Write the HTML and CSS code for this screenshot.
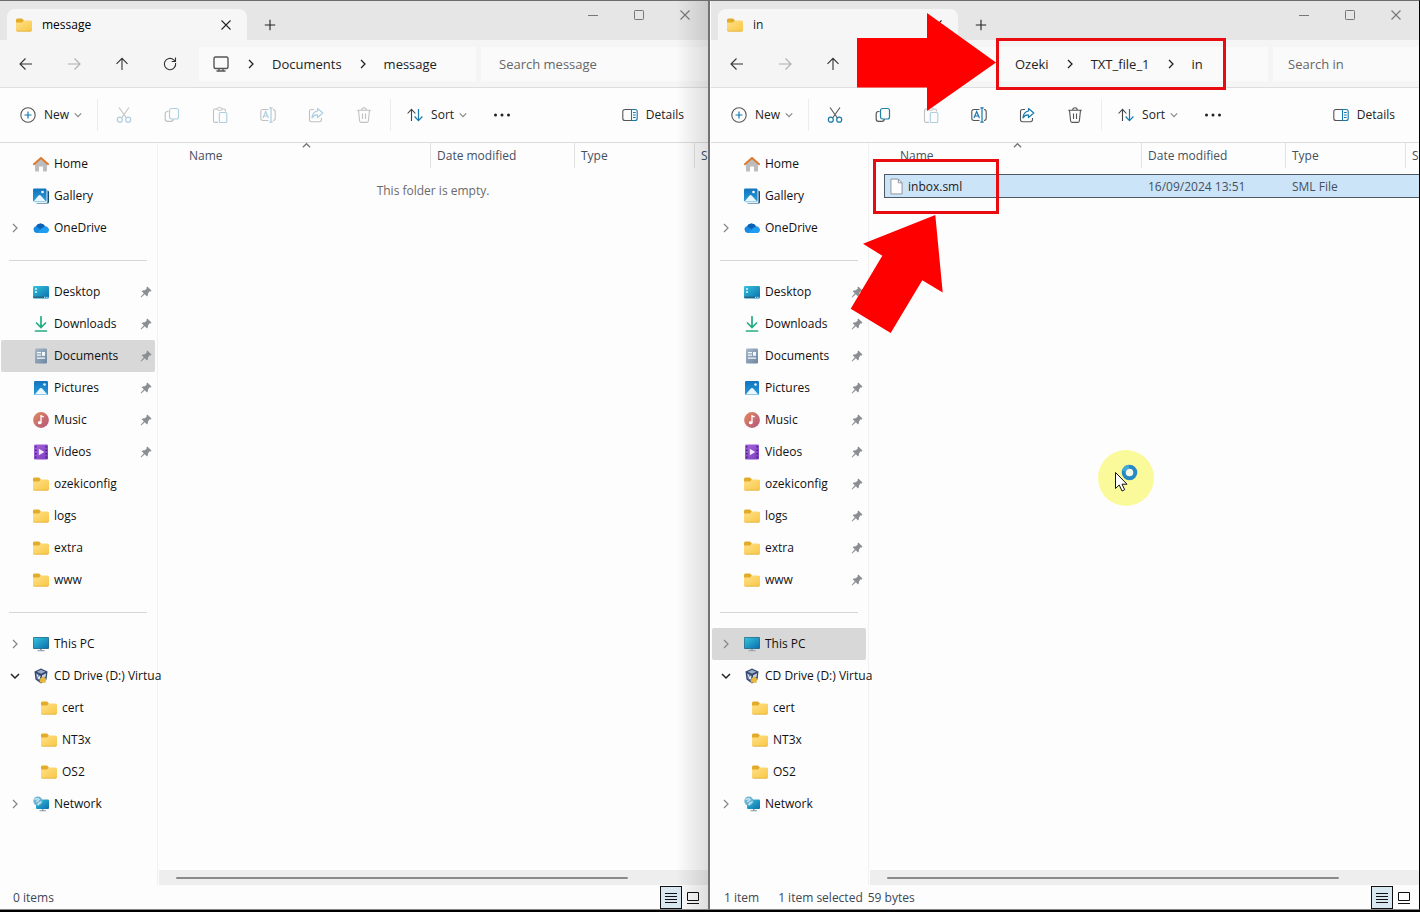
FILE: index.html
```html
<!DOCTYPE html>
<html lang="en">
<head>
<meta charset="utf-8">
<title>File Explorer</title>
<link rel="stylesheet" href="styles.css">
</head>
<body>
<svg class="defs" aria-hidden="true">
  <defs>
    <linearGradient id="g-folder" x1="0" y1="0" x2="1" y2="1"><stop offset="0" stop-color="#ffe08a"/><stop offset="1" stop-color="#f8c744"/></linearGradient>
    <linearGradient id="g-blue" x1="0" y1="0" x2="1" y2="1"><stop offset="0" stop-color="#36c3dc"/><stop offset="1" stop-color="#0b6fae"/></linearGradient>
    <linearGradient id="g-pic" x1="0" y1="0" x2="0" y2="1"><stop offset="0" stop-color="#1174bd"/><stop offset="1" stop-color="#2a9bdc"/></linearGradient>
    <linearGradient id="g-music" x1="0" y1="0" x2="1" y2="1"><stop offset="0" stop-color="#e58a5c"/><stop offset="1" stop-color="#b0557f"/></linearGradient>
    <linearGradient id="g-video" x1="0" y1="0" x2="1" y2="1"><stop offset="0" stop-color="#a764dc"/><stop offset="1" stop-color="#7a3dc0"/></linearGradient>
    <linearGradient id="g-doc" x1="0" y1="0" x2="1" y2="1"><stop offset="0" stop-color="#a7b9cb"/><stop offset="1" stop-color="#6d859e"/></linearGradient>
    <symbol id="folder" viewBox="0 0 16 16"><path d="M0 3Q0 1.500 1.500 1.500H6L8 3.500V7H0Z" fill="#e2ac28"/><path d="M0 5.500H6L8 3.500H14.500Q16 3.500 16 5V13Q16 14.500 14.500 14.500H1.500Q0 14.500 0 13Z" fill="url(#g-folder)"/><path d="M.5 13.500Q.8 14.200 1.500 14.200H14.500Q15.200 14.200 15.500 13.500" fill="none" stroke="#dfae3c" stroke-width=".7"/></symbol>
    <symbol id="home" viewBox="0 0 16 16"><path d="M2 7 8 2 14 7V14.500Q14 15.500 13 15.500H10V10.500H6V15.500H3Q2 15.500 2 14.500Z" fill="#bdbdc0"/><path d="M.9 8.200 8 1.900 15.100 8.200" fill="none" stroke="#dc7b30" stroke-width="2" stroke-linecap="round" stroke-linejoin="round"/></symbol>
    <symbol id="gallery" viewBox="0 0 16 16"><rect x="3" y="2.500" width="13" height="13" rx="1.500" fill="#164e6e"/><rect x="1.500" y="1.500" width="13" height="13.500" rx="1" fill="#dceef8"/><rect x="0" y=".5" width="13.500" height="13" rx="1.300" fill="url(#g-pic)"/><path d="M.8 13.300 5.500 7.500Q6.600 6.500 7.700 7.500L12.800 13.300Z" fill="#e9f6fd"/><circle cx="9.500" cy="4" r="1.300" fill="#fff"/></symbol>
    <symbol id="cloud" viewBox="0 0 16 16"><path d="M3.500 13A3.500 3.500 0 0 1 3 6.200 5 5 0 0 1 12 6.300 3.400 3.400 0 0 1 12.800 13Z" fill="#178be0"/><path d="M3 6.200A5 5 0 0 1 12 6.300L7 9Z" fill="#0b61b5"/><path d="M3.500 13 11 7.200Q16 6.700 16 10 15.600 13 12.800 13Z" fill="#1f9df0"/></symbol>
    <symbol id="desktop" viewBox="0 0 16 16"><rect y="2" width="16" height="12.500" rx="1.300" fill="url(#g-blue)"/><path d="M2 5H4M2 8H4" stroke="#d9f7ff" stroke-width="1.300"/><path d="M.5 13.300H11" stroke="#28627f" stroke-width="1.400"/><path d="M11 13.300H15.500" stroke="#9fe2f4" stroke-width="1.200" stroke-dasharray="1 .7"/></symbol>
    <symbol id="download" viewBox="0 0 16 16"><path d="M8 .8V11M3.500 7 8 11.500 12.500 7M2.500 15H13.500" fill="none" stroke="#26ac83" stroke-width="1.700" stroke-linecap="round"/></symbol>
    <symbol id="document" viewBox="0 0 16 16"><rect x="2" y=".5" width="12" height="15" rx="1.200" fill="url(#g-doc)"/><path d="M4 4.700H8M4 7.200H8M4 10.200H12" stroke="#f4f8fb" stroke-width="1.200"/><rect x="9" y="4" width="3" height="3.800" fill="#f4f8fb"/></symbol>
    <symbol id="picture" viewBox="0 0 16 16"><rect x="1" y="1" width="14" height="14" rx="1.200" fill="url(#g-pic)"/><path d="M1.800 14.500 6.800 8.500Q8 7.400 9.200 8.500L14.200 14.500Z" fill="#edf8fe"/><circle cx="11.500" cy="4.500" r="1.300" fill="#d8f1ff"/></symbol>
    <symbol id="music" viewBox="0 0 16 16"><circle cx="8" cy="8" r="7.900" fill="url(#g-music)"/><ellipse cx="6.700" cy="10.700" rx="1.900" ry="1.600" fill="#fff"/><path d="M8 10.700V3.800L10.800 5" fill="none" stroke="#fff" stroke-width="1.300"/></symbol>
    <symbol id="video" viewBox="0 0 16 16"><rect x="1" y=".5" width="14" height="15" rx="1.200" fill="url(#g-video)"/><path d="M2.800 2V15M13.200 2V15" stroke="#45207e" stroke-width="1.500" stroke-dasharray="1.500 2"/><path d="M5.800 4.700 11.300 8 5.800 11.300Z" fill="#f3e9ff"/></symbol>
    <symbol id="pc" viewBox="0 0 16 16"><path d="M7 12H9V14H11.500V15.200H4.500V14H7Z" fill="#9aa7b2"/><rect y="1" width="16" height="12" rx="1" fill="#316b85"/><rect x=".7" y="1.700" width="14.600" height="10.600" rx=".5" fill="url(#g-blue)"/></symbol>
    <symbol id="cd" viewBox="0 0 16 16"><path d="M8 .6 14.500 3.500 13.500 11.500 8 15.400 2.500 11.500 1.500 3.500Z" fill="#30446d"/><path d="M3.500 3.700 8 1.800 12.500 3.700 8 5.800Z" fill="#9babc4"/><path d="M2.800 5 7.400 7.200V13.500L3.500 10.800Z" fill="#6e81a5"/><path d="M4 6.500 6 11 7 8" stroke="#fff" stroke-width=".9" fill="none"/><path d="M9 7.300 13.200 5.300 12.500 9 9 10Z" fill="#c8d1df"/><path d="M7.500 10 10.500 8.500 13 10.500 12.500 15 9.500 14.500 6.500 14.800Z" fill="#e8b83d"/></symbol>
    <symbol id="network" viewBox="0 0 16 16"><path d="M9 12H10.500V14.200H13V15.300H6.500V14.200H9Z" fill="#8a9aa7"/><rect x="3" y="3.500" width="13" height="9.500" rx="1" fill="url(#g-blue)"/><circle cx="4.800" cy="5" r="4.500" fill="#6db3d3"/><path d="M1.500 3.500Q4.500 2 6 3.500 5 5.500 3 5.500M5 9.300Q5 7 8.500 6" fill="none" stroke="#c4e6f2" stroke-width="1.500"/></symbol>
    <symbol id="pin" viewBox="0 0 12 12"><path d="M7.300.6 11.500 4.500 10.600 5.500 9.700 5.300 8 7.400Q8.200 9.200 7 10.400L4.800 8.200 1.200 11.400.6 10.900 3.800 7.300 1.600 5.200Q3 4 4.800 4.300L6.800 2.500 6.500 1.500Z" fill="#8b8e92"/></symbol>
    <symbol id="chev" viewBox="0 0 10 10"><path d="M3 1 7 5 3 9" fill="none" stroke="currentColor" stroke-width="1.300"/></symbol>
    <symbol id="chev-down" viewBox="0 0 10 10"><path d="M1 3 5 7 9 3" fill="none" stroke="currentColor" stroke-width="1.500"/></symbol>
    <symbol id="back" viewBox="0 0 16 16"><path d="M14 8H2M7.500 2.500 2 8 7.500 13.500" fill="none" stroke="currentColor" stroke-width="1.100"/></symbol>
    <symbol id="forward" viewBox="0 0 16 16"><path d="M2 8H14M8.500 2.500 14 8 8.500 13.500" fill="none" stroke="currentColor" stroke-width="1.100"/></symbol>
    <symbol id="up" viewBox="0 0 16 16"><path d="M8 14V2.500M2.500 7.800 8 2.300 13.500 7.800" fill="none" stroke="currentColor" stroke-width="1.100"/></symbol>
    <symbol id="refresh" viewBox="0 0 16 16"><path d="M13.600 7A5.700 5.700 0 1 1 11.800 3.800L13.500 5.500M13.500 1.500V5.500H9.700" fill="none" stroke="currentColor" stroke-width="1.100"/></symbol>
    <symbol id="monitor" viewBox="0 0 18 18"><rect x="2" y="2" width="14" height="11.500" rx="1.500" fill="none" stroke="#555" stroke-width="1.400"/><path d="M7 13.500V16M11 13.500V16M4.500 16H13.500" stroke="#555" stroke-width="1.300"/></symbol>
    <symbol id="close" viewBox="0 0 12 12"><path d="M1.500 1.500 10.500 10.500M10.500 1.500 1.500 10.500" stroke="currentColor" stroke-width="1.100"/></symbol>
    <symbol id="plus" viewBox="0 0 12 12"><path d="M6 .8V11.200M.8 6H11.200" stroke="currentColor" stroke-width="1.100"/></symbol>
    <symbol id="min" viewBox="0 0 12 12"><path d="M1 6.500H11" stroke="currentColor"/></symbol>
    <symbol id="max" viewBox="0 0 12 12"><rect x="1.500" y="1.500" width="9" height="9" rx=".8" fill="none" stroke="currentColor"/></symbol>
    <symbol id="new" viewBox="0 0 16 16"><circle cx="8" cy="8" r="7.200" fill="none" stroke="#555" stroke-width="1.100"/><path d="M8 4.500V11.500M4.500 8H11.500" stroke="#1779ad" stroke-width="1.200"/></symbol>
    <symbol id="cut" viewBox="0 0 16 16"><path d="M3 .5 10.600 11.200M13 .5 5.400 11.200" stroke="#555" stroke-width="1.100"/><g fill="none" stroke="#1779ad" stroke-width="1.200"><circle cx="3.800" cy="12.700" r="2.500"/><circle cx="12.200" cy="12.700" r="2.500"/></g></symbol>
    <symbol id="copy" viewBox="0 0 16 16"><path d="M4.500 4.500H3.500Q1.200 4.500 1.200 6.800V12Q1.200 14.300 3.500 14.300H7Q9.200 14.300 9.300 12" fill="none" stroke="#555" stroke-width="1.200"/><rect x="5.500" y="1.500" width="9" height="10.500" rx="2" fill="none" stroke="#1f80a8" stroke-width="1.200"/></symbol>
    <symbol id="paste" viewBox="0 0 16 16"><path d="M5 2H3Q1.500 2 1.500 3.500V14Q1.500 15.400 3 15.400H6M10 2H12Q13.500 2 13.500 3.500V4.500" fill="none" stroke="#555" stroke-width="1.100"/><rect x="5" y=".7" width="5" height="2.600" rx="1.200" fill="none" stroke="#555"/><rect x="7.300" y="5.500" width="7.500" height="10" rx="1.200" fill="none" stroke="#1779ad" stroke-width="1.100"/></symbol>
    <symbol id="rename" viewBox="0 0 16 16"><path d="M8.500 2.500H3Q.8 2.500.8 4.700V11.300Q.8 13.500 3 13.500H8.500M13 2.500Q15.200 2.700 15.200 4.700V11.300Q15.200 13.300 13 13.500" fill="none" stroke="#555" stroke-width="1.100"/><path d="M11 .8V15.200M9.300.8H12.700M9.300 15.200H12.700M3 11 5.700 4.500 8.400 11M4 9H7.400" fill="none" stroke="#1779ad" stroke-width="1.200"/></symbol>
    <symbol id="share" viewBox="0 0 16 16"><path d="M6 2.500H3.500Q1.500 2.500 1.500 4.500V12.500Q1.500 14.700 3.500 14.700H11.500Q13.500 14.700 13.500 12.500V11" fill="none" stroke="#555" stroke-width="1.100"/><path d="M9.500 1.500 14.800 6 9.500 10.500V8Q6 7.700 4 10.800 4.500 4.800 9.500 4Z" fill="none" stroke="#1779ad" stroke-width="1.200" stroke-linejoin="round"/></symbol>
    <symbol id="trash" viewBox="0 0 16 16"><path d="M1.200 3.200H14.800M5.700 3.200Q5.700.8 8 .8 10.300.8 10.300 3.200M2.500 3.200 3.600 13.700Q3.800 15.400 5.400 15.400H10.600Q12.200 15.400 12.400 13.700L13.500 3.200M6.500 6.500V12M9.500 6.500V12" fill="none" stroke="#555" stroke-width="1.100"/></symbol>
    <symbol id="sort" viewBox="0 0 16 16"><path d="M4.500 14V2.500M.6 6.500 4.500 2.300 8.400 6.500" fill="none" stroke="#444" stroke-width="1.100"/><path d="M11.500 2V13.500M7.600 9.500 11.500 13.700 15.400 9.500" fill="none" stroke="#1779ad" stroke-width="1.200"/></symbol>
    <symbol id="dots" viewBox="0 0 18 16"><g fill="#222"><circle cx="2.500" cy="8" r="1.500"/><circle cx="9" cy="8" r="1.500"/><circle cx="15.500" cy="8" r="1.500"/></g></symbol>
    <symbol id="details" viewBox="0 0 16 16"><path d="M9.500 2.500H3Q.8 2.500.8 4.500V11.500Q.8 13.500 3 13.500H9.500" fill="none" stroke="#555" stroke-width="1.100"/><path d="M9.500 2.500H13Q15.200 2.500 15.200 4.500V11.500Q15.200 13.500 13 13.500H9.500ZM11 5.500H13.700M11 8H13.700M11 10.500H13.700" fill="none" stroke="#1779ad" stroke-width="1.100"/></symbol>
    <symbol id="file" viewBox="0 0 14 18"><path d="M1 1H9L13 5V17H1Z" fill="#fdfdfd" stroke="#8b8f93"/><path d="M9 1V5H13" fill="none" stroke="#8b8f93"/></symbol>
    <symbol id="list" viewBox="0 0 12 12"><path d="M0 1.500H12M0 4.500H12M0 7.500H12M0 10.500H12" stroke="#111"/></symbol>
    <symbol id="tiles" viewBox="0 0 12 12"><path d="M.5.5H11.500V8.500H.5ZM0 11.500H12" fill="none" stroke="#111"/></symbol>
  </defs>
</svg>

<div class="desktop">
  <section class="window window-left" aria-label="message">
    <header class="tabbar">
      <div class="tab tab-active"><svg class="i16"><use href="#folder"/></svg><span class="tab-title">message</span><button class="plain" aria-label="Close tab"><svg class="i12"><use href="#close"/></svg></button></div>
      <button class="plain add-tab" aria-label="New tab"><svg class="i12"><use href="#plus"/></svg></button>
      <div class="controls">
        <button class="plain" aria-label="Minimize"><svg class="i12"><use href="#min"/></svg></button>
        <button class="plain" aria-label="Maximize"><svg class="i12"><use href="#max"/></svg></button>
        <button class="plain" aria-label="Close"><svg class="i12"><use href="#close"/></svg></button>
      </div>
    </header>
    <div class="addressbar">
      <div class="nav">
        <button class="plain" aria-label="Back"><svg class="i16"><use href="#back"/></svg></button>
        <button class="plain" aria-label="Forward" disabled><svg class="i16"><use href="#forward"/></svg></button>
        <button class="plain" aria-label="Up"><svg class="i16"><use href="#up"/></svg></button>
        <button class="plain" aria-label="Refresh"><svg class="i16"><use href="#refresh"/></svg></button>
      </div>
      <nav class="crumbs" aria-label="Path">
        <svg class="i18"><use href="#monitor"/></svg>
        <svg class="i10"><use href="#chev"/></svg>
        <a href="#documents">Documents</a>
        <svg class="i10"><use href="#chev"/></svg>
        <a href="#message">message</a>
      </nav>
      <input class="search" type="search" placeholder="Search message" aria-label="Search message">
    </div>
    <div class="toolbar">
      <button class="plain new"><svg class="i16"><use href="#new"/></svg>New<svg class="i8"><use href="#chev-down"/></svg></button>
      <div class="tools">
        <button class="plain" aria-label="Cut" disabled><svg class="i16"><use href="#cut"/></svg></button>
        <button class="plain" aria-label="Copy" disabled><svg class="i16"><use href="#copy"/></svg></button>
        <button class="plain" aria-label="Paste" disabled><svg class="i16"><use href="#paste"/></svg></button>
        <button class="plain" aria-label="Rename" disabled><svg class="i16"><use href="#rename"/></svg></button>
        <button class="plain" aria-label="Share" disabled><svg class="i16"><use href="#share"/></svg></button>
        <button class="plain" aria-label="Delete" disabled><svg class="i16"><use href="#trash"/></svg></button>
      </div>
      <button class="plain sort"><svg class="i16"><use href="#sort"/></svg>Sort<svg class="i8"><use href="#chev-down"/></svg></button>
      <button class="plain more" aria-label="See more"><svg class="i18"><use href="#dots"/></svg></button>
      <button class="plain details"><svg class="i16"><use href="#details"/></svg>Details</button>
    </div>
    <div class="body">
      <nav class="side" aria-label="Folders">
        <a class="row" href="#home"><span class="twist"></span><svg class="i16"><use href="#home"/></svg><span class="label">Home</span></a>
        <a class="row" href="#gallery"><span class="twist"></span><svg class="i16"><use href="#gallery"/></svg><span class="label">Gallery</span></a>
        <a class="row" href="#onedrive"><span class="twist"><svg class="i10"><use href="#chev"/></svg></span><svg class="i16"><use href="#cloud"/></svg><span class="label">OneDrive</span></a>
        <hr>
        <a class="row" href="#desktop"><span class="twist"></span><svg class="i16"><use href="#desktop"/></svg><span class="label">Desktop</span><svg class="pin"><use href="#pin"/></svg></a>
        <a class="row" href="#downloads"><span class="twist"></span><svg class="i16"><use href="#download"/></svg><span class="label">Downloads</span><svg class="pin"><use href="#pin"/></svg></a>
        <a class="row selected" href="#documents"><span class="twist"></span><svg class="i16"><use href="#document"/></svg><span class="label">Documents</span><svg class="pin"><use href="#pin"/></svg></a>
        <a class="row" href="#pictures"><span class="twist"></span><svg class="i16"><use href="#picture"/></svg><span class="label">Pictures</span><svg class="pin"><use href="#pin"/></svg></a>
        <a class="row" href="#music"><span class="twist"></span><svg class="i16"><use href="#music"/></svg><span class="label">Music</span><svg class="pin"><use href="#pin"/></svg></a>
        <a class="row" href="#videos"><span class="twist"></span><svg class="i16"><use href="#video"/></svg><span class="label">Videos</span><svg class="pin"><use href="#pin"/></svg></a>
        <a class="row" href="#ozekiconfig"><span class="twist"></span><svg class="i16"><use href="#folder"/></svg><span class="label">ozekiconfig</span></a>
        <a class="row" href="#logs"><span class="twist"></span><svg class="i16"><use href="#folder"/></svg><span class="label">logs</span></a>
        <a class="row" href="#extra"><span class="twist"></span><svg class="i16"><use href="#folder"/></svg><span class="label">extra</span></a>
        <a class="row" href="#www"><span class="twist"></span><svg class="i16"><use href="#folder"/></svg><span class="label">www</span></a>
        <hr>
        <a class="row" href="#pc"><span class="twist"><svg class="i10"><use href="#chev"/></svg></span><svg class="i16"><use href="#pc"/></svg><span class="label">This PC</span></a>
        <a class="row" href="#cd"><span class="twist open"><svg class="i10"><use href="#chev-down"/></svg></span><svg class="i16"><use href="#cd"/></svg><span class="label">CD Drive (D:) Virtua</span></a>
        <a class="row child" href="#cert"><span class="twist"></span><svg class="i16"><use href="#folder"/></svg><span class="label">cert</span></a>
        <a class="row child" href="#nt3x"><span class="twist"></span><svg class="i16"><use href="#folder"/></svg><span class="label">NT3x</span></a>
        <a class="row child" href="#os2"><span class="twist"></span><svg class="i16"><use href="#folder"/></svg><span class="label">OS2</span></a>
        <a class="row" href="#network"><span class="twist"><svg class="i10"><use href="#chev"/></svg></span><svg class="i16"><use href="#network"/></svg><span class="label">Network</span></a>
      </nav>
      <main class="pane">
        <div class="listing">
          <table>
            <colgroup><col class="c-name"><col class="c-date"><col class="c-type"><col class="c-size"></colgroup>
            <thead><tr><th class="sorted">Name<svg class="caret"><use href="#chev-down"/></svg></th><th>Date modified</th><th>Type</th><th>Size</th></tr></thead>
          </table>
          <p class="empty">This folder is empty.</p>
        </div>
        <div class="scroll"><div class="thumb"></div></div>
      </main>
    </div>
    <footer class="status">
      <span>0 items</span>
      <div class="views"><button class="plain view on" aria-label="Details view"><svg class="i12"><use href="#list"/></svg></button><button class="plain view" aria-label="Large icons view"><svg class="i12"><use href="#tiles"/></svg></button></div>
    </footer>
  </section>

  <section class="window window-right" aria-label="in">
    <header class="tabbar">
      <div class="tab"><svg class="i16"><use href="#folder"/></svg><span class="tab-title">in</span><button class="plain" aria-label="Close tab"><svg class="i12"><use href="#close"/></svg></button></div>
      <button class="plain add-tab" aria-label="New tab"><svg class="i12"><use href="#plus"/></svg></button>
      <div class="controls">
        <button class="plain" aria-label="Minimize"><svg class="i12"><use href="#min"/></svg></button>
        <button class="plain" aria-label="Maximize"><svg class="i12"><use href="#max"/></svg></button>
        <button class="plain" aria-label="Close"><svg class="i12"><use href="#close"/></svg></button>
      </div>
    </header>
    <div class="addressbar">
      <div class="nav">
        <button class="plain" aria-label="Back"><svg class="i16"><use href="#back"/></svg></button>
        <button class="plain" aria-label="Forward" disabled><svg class="i16"><use href="#forward"/></svg></button>
        <button class="plain" aria-label="Up"><svg class="i16"><use href="#up"/></svg></button>
        <button class="plain" aria-label="Refresh"><svg class="i16"><use href="#refresh"/></svg></button>
      </div>
      <nav class="crumbs crumbs-deep" aria-label="Path">
        <a href="#ozeki">Ozeki</a>
        <svg class="i10"><use href="#chev"/></svg>
        <a href="#txt">TXT_file_1</a>
        <svg class="i10"><use href="#chev"/></svg>
        <a href="#in">in</a>
      </nav>
      <input class="search search-short" type="search" placeholder="Search in" aria-label="Search in">
    </div>
    <div class="toolbar">
      <button class="plain new"><svg class="i16"><use href="#new"/></svg>New<svg class="i8"><use href="#chev-down"/></svg></button>
      <div class="tools">
        <button class="plain" aria-label="Cut"><svg class="i16"><use href="#cut"/></svg></button>
        <button class="plain" aria-label="Copy"><svg class="i16"><use href="#copy"/></svg></button>
        <button class="plain" aria-label="Paste" disabled><svg class="i16"><use href="#paste"/></svg></button>
        <button class="plain" aria-label="Rename"><svg class="i16"><use href="#rename"/></svg></button>
        <button class="plain" aria-label="Share"><svg class="i16"><use href="#share"/></svg></button>
        <button class="plain" aria-label="Delete"><svg class="i16"><use href="#trash"/></svg></button>
      </div>
      <button class="plain sort"><svg class="i16"><use href="#sort"/></svg>Sort<svg class="i8"><use href="#chev-down"/></svg></button>
      <button class="plain more" aria-label="See more"><svg class="i18"><use href="#dots"/></svg></button>
      <button class="plain details"><svg class="i16"><use href="#details"/></svg>Details</button>
    </div>
    <div class="body">
      <nav class="side" aria-label="Folders">
        <a class="row" href="#home"><span class="twist"></span><svg class="i16"><use href="#home"/></svg><span class="label">Home</span></a>
        <a class="row" href="#gallery"><span class="twist"></span><svg class="i16"><use href="#gallery"/></svg><span class="label">Gallery</span></a>
        <a class="row" href="#onedrive"><span class="twist"><svg class="i10"><use href="#chev"/></svg></span><svg class="i16"><use href="#cloud"/></svg><span class="label">OneDrive</span></a>
        <hr>
        <a class="row" href="#desktop"><span class="twist"></span><svg class="i16"><use href="#desktop"/></svg><span class="label">Desktop</span><svg class="pin"><use href="#pin"/></svg></a>
        <a class="row" href="#downloads"><span class="twist"></span><svg class="i16"><use href="#download"/></svg><span class="label">Downloads</span><svg class="pin"><use href="#pin"/></svg></a>
        <a class="row" href="#documents"><span class="twist"></span><svg class="i16"><use href="#document"/></svg><span class="label">Documents</span><svg class="pin"><use href="#pin"/></svg></a>
        <a class="row" href="#pictures"><span class="twist"></span><svg class="i16"><use href="#picture"/></svg><span class="label">Pictures</span><svg class="pin"><use href="#pin"/></svg></a>
        <a class="row" href="#music"><span class="twist"></span><svg class="i16"><use href="#music"/></svg><span class="label">Music</span><svg class="pin"><use href="#pin"/></svg></a>
        <a class="row" href="#videos"><span class="twist"></span><svg class="i16"><use href="#video"/></svg><span class="label">Videos</span><svg class="pin"><use href="#pin"/></svg></a>
        <a class="row" href="#ozekiconfig"><span class="twist"></span><svg class="i16"><use href="#folder"/></svg><span class="label">ozekiconfig</span><svg class="pin"><use href="#pin"/></svg></a>
        <a class="row" href="#logs"><span class="twist"></span><svg class="i16"><use href="#folder"/></svg><span class="label">logs</span><svg class="pin"><use href="#pin"/></svg></a>
        <a class="row" href="#extra"><span class="twist"></span><svg class="i16"><use href="#folder"/></svg><span class="label">extra</span><svg class="pin"><use href="#pin"/></svg></a>
        <a class="row" href="#www"><span class="twist"></span><svg class="i16"><use href="#folder"/></svg><span class="label">www</span><svg class="pin"><use href="#pin"/></svg></a>
        <hr>
        <a class="row selected" href="#pc"><span class="twist"><svg class="i10"><use href="#chev"/></svg></span><svg class="i16"><use href="#pc"/></svg><span class="label">This PC</span></a>
        <a class="row" href="#cd"><span class="twist open"><svg class="i10"><use href="#chev-down"/></svg></span><svg class="i16"><use href="#cd"/></svg><span class="label">CD Drive (D:) Virtua</span></a>
        <a class="row child" href="#cert"><span class="twist"></span><svg class="i16"><use href="#folder"/></svg><span class="label">cert</span></a>
        <a class="row child" href="#nt3x"><span class="twist"></span><svg class="i16"><use href="#folder"/></svg><span class="label">NT3x</span></a>
        <a class="row child" href="#os2"><span class="twist"></span><svg class="i16"><use href="#folder"/></svg><span class="label">OS2</span></a>
        <a class="row" href="#network"><span class="twist"><svg class="i10"><use href="#chev"/></svg></span><svg class="i16"><use href="#network"/></svg><span class="label">Network</span></a>
      </nav>
      <main class="pane">
        <div class="listing">
          <table>
            <colgroup><col class="c-name"><col class="c-date"><col class="c-type"><col class="c-size"></colgroup>
            <thead><tr><th class="sorted">Name<svg class="caret"><use href="#chev-down"/></svg></th><th>Date modified</th><th>Type</th><th>Size</th></tr></thead>
            <tbody><tr><td><span class="file"><svg class="file-icon"><use href="#file"/></svg>inbox.sml</span></td><td>16/09/2024 13:51</td><td>SML File</td><td></td></tr></tbody>
          </table>
        </div>
        <div class="scroll"><div class="thumb"></div></div>
      </main>
    </div>
    <footer class="status">
      <span>1 item</span><span class="picked">1 item selected</span><span class="bytes">59 bytes</span>
      <div class="views"><button class="plain view on" aria-label="Details view"><svg class="i12"><use href="#list"/></svg></button><button class="plain view" aria-label="Large icons view"><svg class="i12"><use href="#tiles"/></svg></button></div>
    </footer>
  </section>

  <svg class="marks" width="1420" height="912" viewBox="0 0 1420 912" aria-hidden="true">
    <circle cx="1126" cy="478" r="28" fill="#fafa9b"/>
    <circle cx="1129.500" cy="472.500" r="5.800" fill="#f2f9e8" stroke="#2789c2" stroke-width="4"/>
    <path d="M1124 471A5.800 5.800 0 0 1 1129 466.700" fill="none" stroke="#45a9d8" stroke-width="4"/>
    <path d="M1115.500 472.500V488.500L1119.200 485 1122 491 1124.700 489.700 1122 484.200H1127Z" fill="#fff" stroke="#111"/>
    <path d="M857 38H927V13L996 62.500 927 111V87.500H857Z" fill="#fe0000"/>
    <path d="M935.300 215 942.700 292.500 922.300 280.300 890.700 333 850.700 308.700 882.300 255.700 863 243.700Z" fill="#fe0000"/>
    <g fill="none" stroke="#e80c10" stroke-width="3"><rect x="997.500" y="39.500" width="227" height="49"/><rect x="874.500" y="160.500" width="123" height="52"/></g>
  </svg>
</div>
</body>
</html>
```
FILE: styles.css
```css
* { box-sizing: border-box; }
body {
  margin: 0;
  font-family: "Open Sans", "Noto Sans", sans-serif;
  font-size: 12px;
  line-height: 16px;
  color: #222;
  background: #000;
}
a { color: inherit; text-decoration: none; }
svg { display: block; flex: none; }
.defs { position: absolute; width: 0; height: 0; }
.i8 { width: 8px; height: 8px; }
.i10 { width: 10px; height: 10px; }
.i12 { width: 12px; height: 12px; }
.i16 { width: 16px; height: 16px; }
.i18 { width: 18px; height: 18px; }
.plain {
  display: flex;
  align-items: center;
  justify-content: center;
  padding: 0;
  border: 0;
  background: none;
  font: inherit;
  color: inherit;
}
.plain:disabled { opacity: .35; }

.desktop {
  position: relative;
  display: grid;
  grid-template-columns: 1fr 1fr;
  min-height: 100vh;
  padding-bottom: 2px;
  overflow: hidden;
}
.window {
  position: relative;
  display: flex;
  flex-direction: column;
  min-width: 0;
  background: #fdfdfd;
  border-top: 1px solid #6f6c6e;
  border-bottom: 1px solid #858585;
}
.window-left { border-right: 2px solid #737173; }
.window-left::after {
  content: "";
  position: absolute;
  top: 0;
  right: 0;
  bottom: 0;
  width: 32px;
  background: linear-gradient(to right, transparent, rgba(0, 0, 0, .12));
  pointer-events: none;
}
.window-right { padding-left: 1px; border-right: 1px solid #000; }

.tabbar {
  display: flex;
  align-items: flex-end;
  height: 39px;
  padding-left: 7px;
  background: #e6e6e6;
}
.tab {
  display: flex;
  align-items: center;
  gap: 10px;
  width: 240px;
  height: 31px;
  padding: 0 15px 0 9px;
  border-radius: 8px 8px 0 0;
  background: #f6f6f6;
}
.tab-title { flex: 1; }
.tab-active .tab-title { font-weight: 500; color: #000; }
.add-tab { width: 45px; height: 31px; }
.controls {
  display: flex;
  align-self: flex-start;
  margin-left: auto;
  color: #777;
}
.controls .plain { width: 46px; height: 28px; }

.addressbar {
  display: flex;
  align-items: center;
  gap: 5px;
  height: 48px;
  padding-left: 2px;
  background: #f5f5f5;
  border-bottom: 1px solid #dedede;
  font-size: 13px;
}
.nav { display: flex; color: #333; }
.nav .plain { width: 48px; height: 32px; }
.crumbs {
  display: flex;
  flex: 1;
  align-items: center;
  gap: 16px;
  height: 34px;
  padding-left: 13px;
  background: #fafafa;
}
.crumbs-deep { padding-left: 105px; }
.search {
  width: 227px;
  height: 34px;
  padding: 0 0 0 18px;
  border: 0;
  background: #fafafa;
  font: inherit;
  color: #222;
}
.search::placeholder { color: #666; opacity: 1; }
.search-short { width: 146px; padding-left: 15px; }

.toolbar {
  display: flex;
  align-items: center;
  height: 55px;
  padding: 0 24px 0 20px;
  border-bottom: 1px solid #dcdcdc;
}
.toolbar .i8 { margin-left: -3px; color: #888; }
.new { gap: 8px; }
.tools {
  display: flex;
  margin-left: 15px;
  padding: 0 2px;
  border: solid #ececec;
  border-width: 0 1px;
}
.tools .plain { width: 48px; height: 56px; height: 32px; }
.sort { gap: 8px; margin-left: 16px; }
.more { margin-left: 26px; }
.details { gap: 8px; margin-left: auto; }

.body { display: flex; flex: 1; }
.side {
  width: 158px;
  padding: 5px 2px 32px 1px;
  border-right: 1px solid #f1f1f1;
}
.side hr {
  height: 1px;
  margin: 16px 8px 15px 8px;
  border: 0;
  background: #d6d6d6;
}
.row {
  display: flex;
  align-items: center;
  height: 32px;
  color: #111;
}
.selected { background: #d8d8d8; border-radius: 2px; }
.twist {
  display: flex;
  flex: none;
  width: 32px;
  padding-left: 9px;
  color: #888;
}
.open { color: #222; }
.child .twist { width: 40px; }
.label {
  flex: 1;
  min-width: 0;
  margin-left: 5px;
  white-space: nowrap;
}
.pin { width: 12px; height: 12px; margin-right: 3px; }

.pane {
  display: flex;
  flex: 1;
  flex-direction: column;
  min-width: 0;
}
.listing { flex: 1; overflow: hidden; }
table {
  width: 596px;
  margin-left: 15px;
  table-layout: fixed;
  border-collapse: separate;
  border-spacing: 0;
  color: #44505f;
}
.c-name { width: 258px; }
.c-date { width: 144px; }
.c-type { width: 120px; }
.c-size { width: 74px; }
th {
  position: relative;
  height: 25px;
  padding: 0 0 0 6px;
  border-right: 1px solid #e2e2e2;
  font-weight: 400;
  text-align: left;
}
th:first-child { padding-left: 16px; }
.caret {
  position: absolute;
  top: -2px;
  left: 129px;
  width: 9px;
  height: 9px;
  color: #777;
  transform: rotate(180deg);
}
tbody::before { content: ""; display: block; height: 6px; }
td {
  height: 24px;
  padding: 1px 0 0 6px;
  background: #cce4f8;
  border: solid #4d5a66;
  border-width: 1px 0;
}
td:first-child { padding-left: 5px; border-left-width: 1px; }
.file { display: flex; align-items: center; gap: 5px; color: #222; }
.file-icon { width: 13px; height: 17px; }
.empty { margin: 15px 0 0; text-align: center; color: #6a6a6a; }
.scroll {
  height: 15px;
  margin-left: 1px;
  padding: 7px 80px 0 17px;
  background: #eee;
}
.thumb { height: 2px; background: #8a8a8a; border-radius: 1px; }

.status {
  display: flex;
  align-items: center;
  height: 24px;
  padding: 1px 4px 0 13px;
  color: #3d4654;
}
.picked { margin-left: 19px; }
.bytes { margin-left: 5px; }
.views { display: flex; margin-left: auto; }
.view { width: 22px; height: 23px; }
.on { background: #d9e8f0; border: 1px solid #111; }

.marks { position: absolute; top: 0; left: 0; pointer-events: none; }
```
